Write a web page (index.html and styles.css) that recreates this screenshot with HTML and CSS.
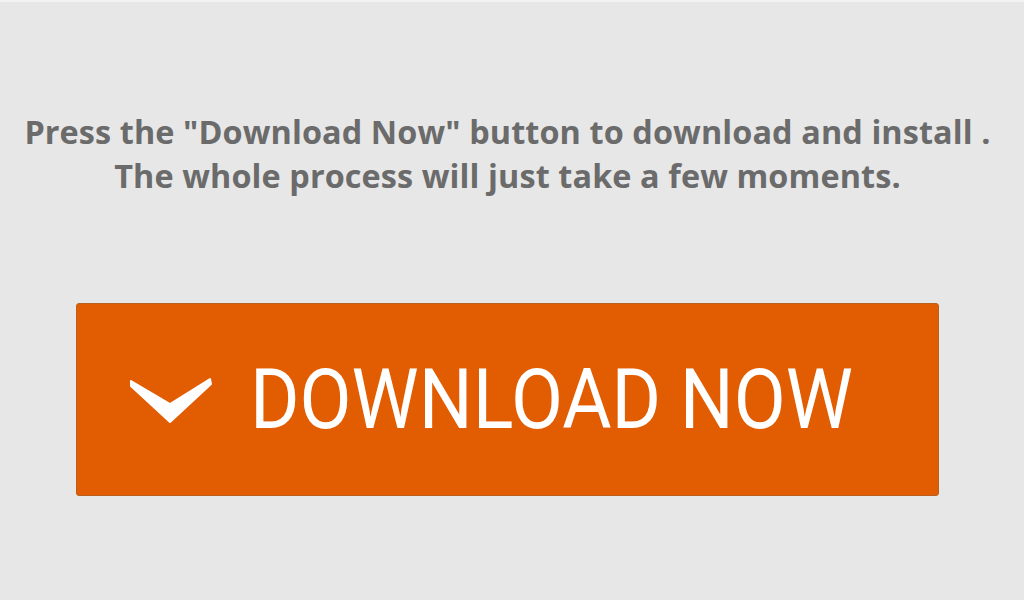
FILE: index.html
```html
<!DOCTYPE html>
<html lang="en">
<head>
    <meta charset="UTF-8">
    <meta name="viewport" content="width=device-width, initial-scale=1.0">
    <title>Download</title>
    <link rel="stylesheet" href="styles.css">
</head>
<body>
    <div class="page">
        <p class="intro">
            Press the "Download Now" button to download and install .<br>
            The whole process will just take a few moments.
        </p>

        <a class="download-btn" href="#">
            <svg class="chevron" width="86" height="50" viewBox="0 0 86 50">
                <path d="M3 5 L42 28 L82 3 L83 8 L42 46 L3 10 Z" fill="#fff" stroke="#fff" stroke-width="2" stroke-linejoin="round"/>
            </svg>
            <span class="label">DOWNLOAD NOW</span>
        </a>
    </div>
</body>
</html>
```

FILE: styles.css
```css
body {
    margin: 0;
    background: #e7e7e7;
}

.page {
    border-top: 2px solid #f3f3f3;
    height: 598px;
    display: flex;
    flex-direction: column;
    align-items: center;
    padding-right: 9px;
    box-sizing: border-box;
}

.intro {
    margin: 107px 0 0;
    font-family: "Open Sans", sans-serif;
    font-weight: 700;
    font-size: 32.4px;
    letter-spacing: 0.1px;
    line-height: 44px;
    color: #6b6b6b;
    text-align: center;
}

.download-btn {
    margin-top: 106px;
    width: 863px;
    height: 193px;
    box-sizing: border-box;
    background: #e25c02;
    border: 1px solid #b9601f;
    border-radius: 3px;
    display: flex;
    align-items: center;
    padding-left: 51px;
    text-decoration: none;
}

.chevron {
    display: block;
    margin-top: 2px;
}

.label {
    display: inline-block;
    margin-left: 36px;
    font-family: Roboto, sans-serif;
    font-size: 84px;
    color: #fff;
    transform: scaleX(0.9);
    transform-origin: left center;
    white-space: nowrap;
}
```
